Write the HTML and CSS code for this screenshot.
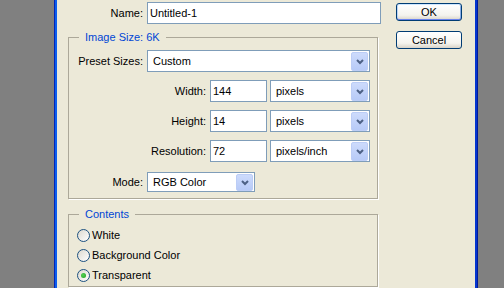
FILE: index.html
```html
<!DOCTYPE html>
<html>
<head>
<meta charset="utf-8">
<link rel="stylesheet" href="styles.css">
</head>
<body>
<div class="desk">
  <div class="dialog">
    <div class="frame">
      <div class="main">
        <div class="row name-row">
          <span class="lbl lbl-name">Name:</span>
          <div class="field name-field">Untitled-1</div>
        </div>

        <fieldset class="group size-group">
          <legend>Image Size: 6K</legend>
          <div class="group-body size-body">
            <div class="row r-preset">
              <span class="lbl lbl-short">Preset Sizes:</span>
              <div class="combo combo-preset"><span class="combo-text">Custom</span><span class="drop"><svg width="8" height="6" viewBox="0 0 8 6"><polyline points="1,1 4,4 7,1" fill="none" stroke="#4D6185" stroke-width="2"/></svg></span></div>
            </div>
            <div class="row r-dim">
              <span class="lbl lbl-long">Width:</span>
              <div class="field num">144</div>
              <div class="combo combo-unit"><span class="combo-text">pixels</span><span class="drop"><svg width="8" height="6" viewBox="0 0 8 6"><polyline points="1,1 4,4 7,1" fill="none" stroke="#4D6185" stroke-width="2"/></svg></span></div>
            </div>
            <div class="row r-dim">
              <span class="lbl lbl-long">Height:</span>
              <div class="field num">14</div>
              <div class="combo combo-unit"><span class="combo-text">pixels</span><span class="drop"><svg width="8" height="6" viewBox="0 0 8 6"><polyline points="1,1 4,4 7,1" fill="none" stroke="#4D6185" stroke-width="2"/></svg></span></div>
            </div>
            <div class="row r-dim">
              <span class="lbl lbl-long">Resolution:</span>
              <div class="field num">72</div>
              <div class="combo combo-unit"><span class="combo-text">pixels/inch</span><span class="drop"><svg width="8" height="6" viewBox="0 0 8 6"><polyline points="1,1 4,4 7,1" fill="none" stroke="#4D6185" stroke-width="2"/></svg></span></div>
            </div>
            <div class="row r-mode">
              <span class="lbl lbl-short">Mode:</span>
              <div class="combo combo-mode"><span class="combo-text">RGB Color</span><span class="drop"><svg width="8" height="6" viewBox="0 0 8 6"><polyline points="1,1 4,4 7,1" fill="none" stroke="#4D6185" stroke-width="2"/></svg></span></div>
            </div>
          </div>
        </fieldset>

        <fieldset class="group contents-group">
          <legend>Contents</legend>
          <div class="group-body contents-body">
            <div class="radio-row"><span class="radio"></span><span>White</span></div>
            <div class="radio-row"><span class="radio"></span><span>Background Color</span></div>
            <div class="radio-row"><span class="radio checked"></span><span>Transparent</span></div>
          </div>
        </fieldset>
      </div>

      <div class="buttons">
        <button class="btn btn-default">OK</button>
        <button class="btn">Cancel</button>
      </div>
    </div>
  </div>
</div>
</body>
</html>
```

FILE: styles.css
```css
html, body {
  margin: 0;
  padding: 0;
  height: 100%;
  overflow: hidden;
}

body {
  background: #808080;
  font-family: "Liberation Sans", Arial, sans-serif;
  font-size: 11px;
  color: #000;
}

.desk {
  display: flex;
  height: 288px;
  padding-left: 54px;
}

.dialog {
  width: 424px;
  box-sizing: border-box;
  background: #ECE9D8;
  border-left: 1px solid #0024B4;
  border-right: 1px solid #001A9C;
}

.frame {
  height: 100%;
  display: flex;
  border-left: 2px solid #0B5EEE;
  border-right: 2px solid #0436CF;
}

.main {
  width: 324px;
  padding-top: 2px;
}

.row {
  display: flex;
  align-items: center;
}

.lbl {
  text-align: right;
  margin-right: 4px;
  white-space: nowrap;
}

.lbl-name { width: 86px; }
.lbl-short { width: 74px; }
.lbl-long { width: 137px; }

.name-row { height: 22px; }

.field {
  box-sizing: border-box;
  height: 22px;
  border: 1px solid #7F9DB9;
  background: #fff;
  padding-left: 2px;
  display: flex;
  align-items: center;
}

.name-field { width: 234px; }
.num { width: 57px; margin-right: 3px; }

.combo {
  box-sizing: border-box;
  height: 22px;
  border: 1px solid #7F9DB9;
  background: #fff;
  display: flex;
  align-items: stretch;
}

.combo-text {
  flex: 1;
  display: flex;
  align-items: center;
  padding-left: 5px;
}

.combo-preset { width: 223px; }
.combo-unit { width: 100px; }
.combo-mode { width: 108px; height: 20px; }

.drop {
  width: 15px;
  margin: 1px 1px 0 0;
  border: 1px solid #BCCDF6;
  border-radius: 2px;
  background: linear-gradient(#CDDBFC, #B7CAF7);
  display: flex;
  align-items: center;
  justify-content: center;
}

.drop svg { display: block; }

.group {
  margin: 7px 0 0 11px;
  padding: 0;
  width: 310px;
  box-sizing: border-box;
  border: 1px solid #ACA899;
  box-shadow: 1px 1px 0 #fff;
  min-width: 0;
}

.group legend {
  margin-left: 10px;
  padding: 0 6px;
  line-height: 13px;
  height: 13px;
  color: #0046D5;
}

.size-body {
  padding: 6px 0 6px 0;
}

.r-preset, .r-dim { height: 22px; }
.r-dim { margin-top: 8px; }
.r-mode { height: 20px; margin-top: 10px; }

.contents-group { margin-top: 9px; }

.contents-body {
  padding: 4px 0 1px 8px;
}

.radio-row {
  height: 20px;
  display: flex;
  align-items: center;
}

.radio {
  width: 13px;
  height: 13px;
  box-sizing: border-box;
  border: 1px solid #1C5180;
  border-radius: 50%;
  background: linear-gradient(135deg, #DCD9CF, #FFFFFF);
  margin-right: 2px;
  display: flex;
  align-items: center;
  justify-content: center;
}

.radio.checked::after {
  content: "";
  width: 5px;
  height: 5px;
  border-radius: 50%;
  background: radial-gradient(circle at 40% 40%, #55D055, #21A121);
}

.buttons {
  margin-left: 15px;
  padding-top: 3px;
  display: flex;
  flex-direction: column;
  width: 66px;
}

.btn {
  width: 66px;
  height: 18px;
  box-sizing: border-box;
  border: 1px solid #003C74;
  border-radius: 3px;
  background: linear-gradient(#FFFFFF, #F4F3EE 70%, #D8D3C8);
  font-family: "Liberation Sans", Arial, sans-serif;
  font-size: 11px;
  color: #000;
  padding: 0;
  line-height: 14px;
}

.btn + .btn { margin-top: 10px; }

.btn-default {
  box-shadow: inset 0 1px 0 #CEE7FF, inset 0 -1px 0 #6982EE, inset 1px 0 0 #BCD4F6, inset -1px 0 0 #89ADE4;
}
```
